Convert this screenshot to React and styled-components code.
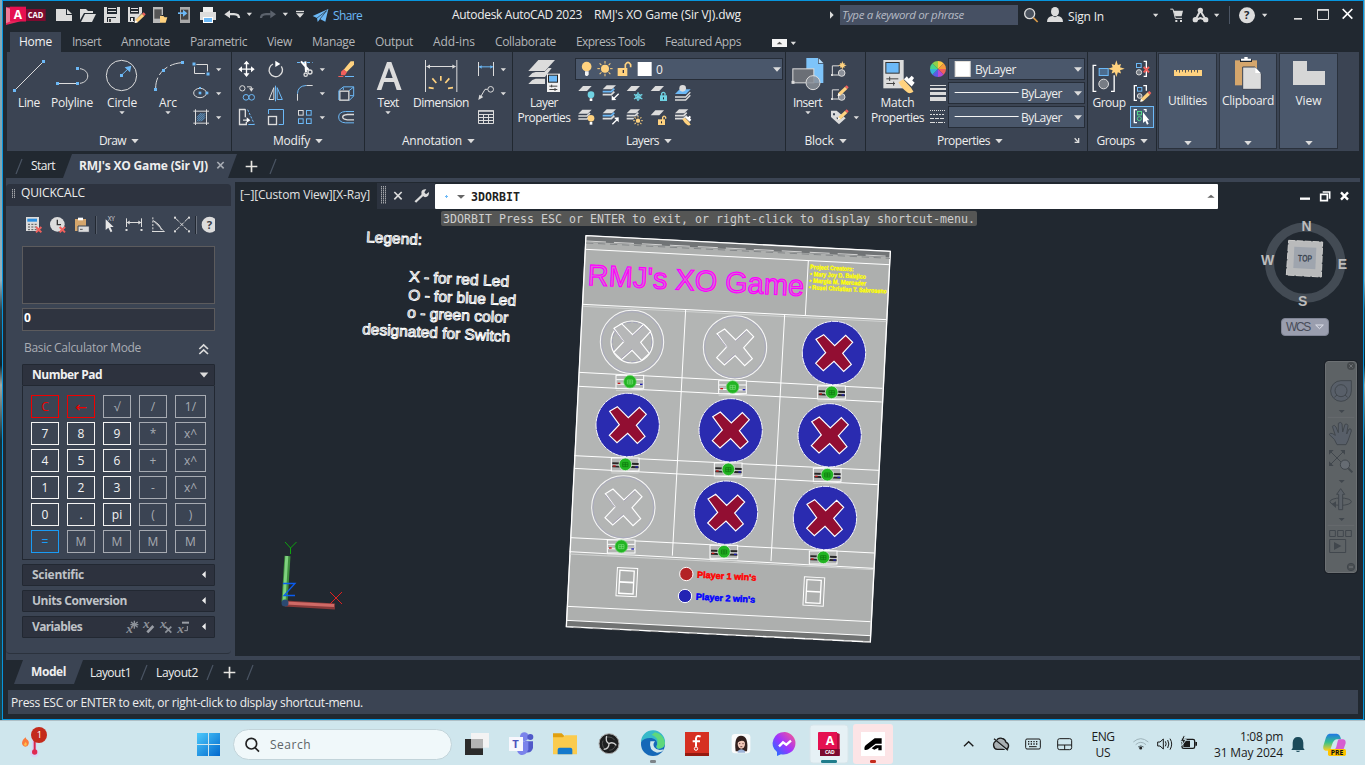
import React, { useLayoutEffect, useRef } from "react";
import styled, { createGlobalStyle } from "styled-components";

const DARK = "#212830";
const PANEL = "#3b4453";
const LIGHT = "#dcdcdc";
const BLUE = "#6cb9f7";
const GOLD = "#ffd27f";
const RED = "#f0605c";
const CYAN = "#6fd3e3";

const Global = createGlobalStyle`
  * { box-sizing: border-box; }
  html, body { margin: 0; padding: 0; overflow: hidden; }
  body { font-family: "Open Sans", "Noto Sans", sans-serif; font-size: 12px; color: #eee; }
`;

/* ---------- shared pieces ---------- */

const Svg = styled.svg`
  display: block;
  flex: none;
  fill: none;
  stroke: ${LIGHT};
  stroke-width: 3;
`;

// Icons are drawn on a grid of three units to the pixel.
const Ico = ({ v, children }) => {
  const [, , w, h] = v.split(" ").map(Number);
  return (
    <Svg viewBox={v} width={w / 3} height={h / 3}>
      {children}
    </Svg>
  );
};
const S = ({ d, c = LIGHT, w = 3, dash }) => <path d={d} stroke={c} strokeWidth={w} strokeDasharray={dash} />;
const F = ({ d, c = LIGHT, s = "none" }) => <path d={d} fill={c} stroke={s} />;
const Dot = ({ x, y, c = BLUE, r = 4.5 }) => <rect x={x - r} y={y - r} width={r * 2} height={r * 2} fill={c} stroke="none" />;
const Down = ({ x, y, r = 8 }) => <F d={`M${x - r} ${y - r * 0.55}h${2 * r}l${-r} ${r * 1.15}z`} />;

const Span = styled.span`
  display: block;
  flex: none;
  white-space: nowrap;
  color: ${(p) => p.$c || "inherit"};
  font-size: ${(p) => p.$size || 12}px;
  font-weight: ${(p) => (p.$bold ? 700 : 400)};
  font-style: ${(p) => (p.$italic ? "italic" : "normal")};
`;

// A run of text whose letter spacing is set so that it takes the given width.
const Txt = ({ w, children, ...rest }) => {
  const ref = useRef(null);
  useLayoutEffect(() => {
    const el = ref.current;
    if (!w) return;
    el.style.letterSpacing = "0px";
    el.style.width = "max-content";
    const natural = el.getBoundingClientRect().width;
    el.style.letterSpacing = (w - natural) / String(children).length + "px";
    el.style.width = w + "px";
  }, [w, children]);
  return (
    <Span ref={ref} {...rest}>
      {children}
    </Span>
  );
};

const Row = styled.div`
  display: flex;
  flex: none;
  align-items: ${(p) => p.$align || "center"};
  gap: ${(p) => p.$gap || 0}px;
  width: ${(p) => (p.$w ? p.$w + "px" : "auto")};
  padding-left: ${(p) => p.$pl || 0}px;
  padding-bottom: ${(p) => p.$pb || 0}px;
`;

/* ---------- window frame ---------- */

const Desktop = styled.div`
  width: 1365px;
  height: 765px;
  display: flex;
  flex-direction: column;
  background: linear-gradient(#86adba 0, #7ea6b4 150px, #93b2be 280px, #2c4650 310px, #10242a 365px, #a0a9a2 385px, #15333a 440px, #1a4650 720px);
`;
const Window = styled.div`
  width: 1362px;
  height: 720px;
  margin-left: 2px;
  border: 1px solid #0795dd;
  background: ${DARK};
  display: flex;
  flex-direction: column;
`;
const TitleBar = styled.div`
  display: flex;
  height: 31px;
  flex: none;
`;
const SearchBox = styled.div`
  width: 178px;
  height: 20px;
  margin-top: 4px;
  padding: 0 0 1px 2px;
  background: #465063;
  display: flex;
  align-items: center;
`;

const Tabs = styled.div`
  display: flex;
  flex: none;
  height: 20px;
  padding-left: 7px;
`;
const Tab = styled.div`
  display: flex;
  align-items: center;
  padding: 0 ${(p) => (p.$on ? 9 : 0)}px 1px;
  margin-right: ${(p) => (p.$on ? 11 : 20)}px;
  background: ${(p) => (p.$on ? PANEL : "transparent")};
  color: ${(p) => (p.$on ? "#f2f2f2" : "#b4b6b9")};
`;

/* ---------- ribbon ---------- */

const Ribbon = styled.div`
  display: flex;
  flex: none;
  height: 99px;
  width: 1352px;
  margin-left: 4px;
  background: ${PANEL};
`;
const PanelBox = styled.div`
  width: ${(p) => p.$w}px;
  flex: none;
  display: flex;
  flex-direction: column;
  border-right: 1px solid ${DARK};
`;
const PanelBody = styled.div`
  display: flex;
  height: 77px;
  padding-top: 5px;
`;
const PanelTitle = styled.div`
  display: flex;
  align-items: center;
  justify-content: center;
  gap: 5px;
  height: 22px;
  padding-top: 1px;
  padding-left: ${(p) => p.$pl || 0}px;
`;
const Big = styled.div`
  width: ${(p) => p.$w}px;
  flex: none;
  display: flex;
  flex-direction: column;
  align-items: center;
  line-height: 15px;
`;
const BigLabel = styled.div`
  display: flex;
  flex-direction: column;
  align-items: center;
  height: 15px;
`;
const Grid = styled.div`
  display: grid;
  grid-template-columns: ${(p) => p.$cols};
  grid-auto-rows: 24px;
  margin-left: ${(p) => p.$ml || 0}px;
  height: 72px;
`;
const Combo = styled.div`
  display: flex;
  align-items: center;
  width: ${(p) => p.$w}px;
  height: 22px;
  margin: 1px 0;
  border: 1px solid #262d38;
  background: #4a576b;
`;
const Stack = styled.div`
  display: flex;
  flex-direction: column;
`;
const Folds = styled.div`
  display: flex;
  gap: 2px;
  padding-left: 1px;
`;
const Fold = styled.div`
  width: ${(p) => p.$w}px;
  height: 96px;
  margin-top: 1px;
  border: 1px solid #2a313c;
  background: #4b586c;
  display: flex;
  flex-direction: column;
  align-items: center;
`;
const FoldFoot = styled.div`
  margin-top: 33px;
`;
const PickOn = styled.div`
  width: 24px;
  height: 22px;
  margin: 1px 0;
  border: 1px solid ${BLUE};
  background: #465a72;
  overflow: hidden;
`;

const Caret = () => (
  <Ico v="0 0 18 12">
    <Down x={9} y={8} />
  </Ico>
);
const Panel = ({ w, title, tw, pl, children, launcher }) => (
  <PanelBox $w={w}>
    <PanelBody>{children}</PanelBody>
    <PanelTitle $pl={pl}>
      <Txt w={tw}>{title}</Txt>
      <Ico v="0 0 24 18">
        <Down x={12} y={9} r={11} />
      </Ico>
      {launcher}
    </PanelTitle>
  </PanelBox>
);
const BigButton = ({ w, labels, caret, icon }) => (
  <Big $w={w}>
    {icon}
    {labels.map(([t, tw]) => (
      <BigLabel key={t}>
        <Txt w={tw}>{t}</Txt>
      </BigLabel>
    ))}
    {caret && <Caret />}
  </Big>
);

const Pencil = ({ x, y }) => (
  <g transform={`translate(${x} ${y})`} stroke="none">
    <path d="M-12 5L8 -14L15 -7L-5 12L-14 14z" fill={GOLD} />
    <path d="M8 -14L13 -18L19 -12L15 -7z" fill={RED} />
    <path d="M-12 5L-14 14L-5 12z" fill="#fff" />
  </g>
);
const Sheet = ({ x, y, c = LIGHT }) => <F c={c} d={`M${x + 14} ${y}h26l-14 15h-26z`} />;
const Sheets = ({ x, y, mid = LIGHT }) => (
  <g>
    <F d={`M${x + 12} ${y}h28l-12 12h-28z`} />
    <S c={mid} w={5} d={`M${x} ${y + 19}h26l9 -9`} />
    <S w={5} d={`M${x} ${y + 28}h26l9 -9`} />
  </g>
);
const Lock = ({ x, y, c, open }) => (
  <g>
    <rect x={x - 10} y={y - 2} width="21" height="17" fill={c} stroke="none" />
    <path d={open ? `M${x + 4} ${y}v-8q5 -7 9 0v4` : `M${x - 5} ${y - 1}v-7q5 -6 10 0v7`} stroke={c} strokeWidth="4" />
    <rect x={x - 1} y={y + 4} width="3" height="6" fill={DARK} stroke="none" />
  </g>
);
const Sun = ({ x, y, r, c = GOLD }) => (
  <g stroke={c}>
    <circle cx={x} cy={y} r={r * 0.55} fill={c} stroke="none" />
    {[0, 45, 90, 135, 180, 225, 270, 315].map((a) => (
      <path key={a} transform={`rotate(${a} ${x} ${y})`} d={`M${x} ${y - r * 0.8}v${-r * 0.4}`} />
    ))}
  </g>
);
const Star = ({ x, y, r }) => {
  const pts = Array.from({ length: 16 }, (_, i) => {
    const a = (i * Math.PI) / 8 - Math.PI / 2;
    const q = i % 2 ? r * 0.48 : i % 4 ? r * 0.8 : r;
    return `${x + q * Math.cos(a)},${y + q * Math.sin(a)}`;
  });
  return <polygon points={pts.join(" ")} fill={GOLD} stroke="none" />;
};
const Cross = ({ x, y, r = 8, c = RED, w = 6 }) => <S c={c} w={w} d={`M${x - r} ${y - r}l${2 * r} ${2 * r}M${x + r} ${y - r}l${-2 * r} ${2 * r}`} />;
const Brush = ({ x, y }) => (
  <g stroke="none">
    <path d={`M${x - 12} ${y - 4}l8 -5l13 14l4 7q-6 4 -10 1q-9 -6 -15 -17z`} fill={GOLD} />
    <path d={`M${x - 3} ${y - 9}l5 -5l3 4l5 -5l4 4l-3 4l4 4l-5 6z`} fill="#fff" />
  </g>
);

const RibbonBar = () => (
  <Ribbon>
    <Panel w={225} title="Draw" tw={27}>
      <BigButton w={44} labels={[["Line", 22]]} icon={
        <Ico v="36 171 102 114"><S d="M44 271L130 185" /><Dot x={43.5} y={271.5} /><Dot x={130.5} y={184.5} /></Ico>} />
      <BigButton w={42} labels={[["Polyline", 42]]} icon={
        <Ico v="165 171 102 114"><S d="M173 250.5H232M240 206C271 210 271 246 240 250" /><Dot x={172.5} y={250.5} /><Dot x={232.5} y={250.5} /><Dot x={232.5} y={205.5} /></Ico>} />
      <BigButton w={58} caret labels={[["Circle", 30]]} icon={
        <Ico v="315 171 102 114"><circle cx="364.5" cy="226.5" r="45.5" /><S c={BLUE} d="M364 226L388 203" /><F c={BLUE} d="M394 197l-4 20l-16 -15z" /><Dot x={364.5} y={226.5} /></Ico>} />
      <BigButton w={34} caret labels={[["Arc", 18]]} icon={
        <Ico v="453 171 102 114"><S dash="34 9" d="M467 266C466 218 505 190 547 188" /><Dot x={466.5} y={268.5} /><Dot x={490.5} y={211.5} /><Dot x={547.5} y={187.5} /></Ico>} />
      <Grid $cols="22px 13px" $ml={5}>
        <Ico v="570 171 66 72"><S d="M589 193.5H622.500V214M615 220.500H583.500V200" /><Dot x={582} y={192} /><Dot x={624} y={222} /></Ico>
        <Ico v="636 171 39 72"><Down x={656} y={209} /></Ico>
        <Ico v="570 243 66 72"><ellipse cx="600" cy="279" rx="19" ry="14" /><Dot x={600} y={279} r={4} /><Dot x={621} y={279} r={4} /><Dot x={600} y={264} r={3} /></Ico>
        <Ico v="636 243 39 72"><Down x={656} y={281} /></Ico>
        <Ico v="570 315 66 72"><S d="M586.500 328V375M619.500 328V375M580 333.500H627M580 369.500H627" /><S c={BLUE} d="M591 364L615 340M591 352L604 339M603 364L615 352M591 358L609 340M597 364L615 346" w={2.5} /></Ico>
        <Ico v="636 315 39 72"><Down x={656} y={353} /></Ico>
      </Grid>
    </Panel>

    <Panel w={133} title="Modify" tw={37}>
      <Grid $cols="29px 29px 28px 16px 24px">
        <Ico v="696 171 87 72"><S c="#fff" w={4} d="M739.500 188V226M720 207.500H760" /><F d="M739.500 182l9 11h-18zM739.500 231l9 -11h-18zM715 207.500l11 -9v18zM764 207.500l-11 -9v18z" c="#fff" /></Ico>
        <Ico v="783 171 87 72"><S w={4} d="M819 192A20 20 0 1 0 844 199" /><F c="#fff" d="M826 182l15 10l-15 9z" /></Ico>
        <Ico v="870 171 84 72"><S c={BLUE} dash="9 6" d="M891 187.500H938" /><S c="#fff" w={6} d="M903 184L926 210M916 184L918 216" /><circle cx="930" cy="216" r="6" strokeWidth="4" /><circle cx="917" cy="224" r="5" strokeWidth="4" /></Ico>
        <Ico v="954 171 48 72"><Down x={967} y={209} /></Ico>
        <Ico v="1002 171 72 72"><F c={GOLD} d="M1031 209L1052 184L1062 184L1062 194L1040 216z" /><F c={RED} d="M1023 215l8 -7l10 9l-6 9h-12z" /><S c={RED} d="M1015 229.500H1030" /><S c={BLUE} d="M1035 229.500H1062" /></Ico>

        <Ico v="696 243 87 72"><circle cx="727" cy="265" r="8" /><S d="M741 260.500H754V266" /><F d="M747 265h14l-7 10z" /><g stroke={BLUE}><circle cx="738" cy="292" r="8.500" /><circle cx="755" cy="292" r="8.500" /></g></Ico>
        <Ico v="783 243 87 72"><S d="M821.500 263V298.500H807z" /><S c={BLUE} d="M831.500 263V298.500H847z" /><S c={BLUE} d="M826.500 257V304" /></Ico>
        <Ico v="870 243 84 72"><S d="M919 256.500H938M892.500 281V302" /><S c={BLUE} d="M892.500 281Q893 258 918 256.500" /></Ico>
        <Ico v="954 243 48 72"><Down x={967} y={281} /></Ico>
        <Ico v="1002 243 72 72"><rect x="1019.500" y="273.500" width="27" height="27" strokeWidth="4" /><S c={BLUE} d="M1016.500 300V272L1030 260.500H1061V288L1048 301M1047 272L1061 261M1030 262V270M1050 287H1060" /></Ico>

        <Ico v="696 315 87 72"><S w={4} d="M736 328.500H718.500V373.500H739V366M736 328V352M729 360.500H743" /><F c="#fff" d="M740 352l11 8.500l-11 8z" /><S c={BLUE} dash="7 4" d="M743 329L762 370" /><S c={BLUE} d="M745 373.500H764" /></Ico>
        <Ico v="783 315 87 72"><S c={BLUE} d="M805.500 342V328.500H850.500V373.500H836" /><rect x="805.500" y="349.500" width="24" height="24" strokeWidth="4" /></Ico>
        <Ico v="870 315 84 72"><rect x="895.500" y="331.500" width="14" height="14" /><g stroke={BLUE}><rect x="919.500" y="331.500" width="14" height="14" /><rect x="895.500" y="356.500" width="14" height="14" /><rect x="919.500" y="356.500" width="14" height="14" /></g></Ico>
        <Ico v="954 315 48 72"><Down x={967} y={353} /></Ico>
        <Ico v="1002 315 72 72"><S c={BLUE} d="M1062 334.500H1036Q1016 336 1016 351Q1016 367 1036 368.500H1062" /><S w={4} d="M1062 343.500H1042Q1028 345 1028 351Q1028 358 1042 359.500H1062" /></Ico>
      </Grid>
    </Panel>

    <Panel w={148} title="Annotation" tw={60}>
      <BigButton w={46} caret labels={[["Text", 21]]} icon={
        <Ico v="1113 171 102 114"><F d="M1130 270L1161 186H1174L1205 270H1190L1182 246H1152L1144 270zM1156 234H1178L1167 203z" /></Ico>} />
      <BigButton w={60} labels={[["Dimension", 56]]} icon={
        <Ico v="1272 171 102 114"><S d="M1276.500 180V276M1370.500 180V276M1280 199.500H1366" /><F d="M1279 199.500l11 -6v13zM1368 199.500l-11 -6v13z" /><S c={GOLD} w={5} d="M1322.500 228V242M1297 235L1309 249M1348 235L1336 249M1286 263L1301 265M1359 263L1344 265" /></Ico>} />
      <Grid $cols="21px 12px" $ml={5}>
        <Ico v="63 171 63 72"><S d="M70.500 186V228M115.500 186V228" /><S c={BLUE} d="M72 200.500H114" /><F c={BLUE} d="M72 200.500l8 -5v11zM114 200.500l-8 -5v11z" /></Ico>
        <Ico v="126 171 36 72"><Down x={145} y={209} /></Ico>
        <Ico v="63 243 63 72"><circle cx="107" cy="268" r="8.500" /><S d="M98 268H90L77 290" /><F d="M70 300l3 -16l12 7z" /></Ico>
        <Ico v="126 243 36 72"><Down x={145} y={281} /></Ico>
        <Ico v="63 315 63 72"><S d="M70.500 332.500H115.500V370.500H70.500zM70 343.500H115M70 352.500H115M70 361.500H115M85.500 343V370M100.500 343V370" /><S w={4} d="M69 333H117" /></Ico>
      </Grid>
    </Panel>

    <Panel w={273} title="Layers" tw={33}>
      <BigButton w={62} labels={[["Layer", 28], ["Properties", 53]]} icon={
        <Ico v="216 171 102 114">
          <F d="M250 180H300L270 213H220z" /><F d="M242 216H268L280 204H290L270 231H220L232 219z" /><F d="M242 236H270V252H220L232 240z" />
          <rect x="276" y="221" width="39" height="55" fill="#f0f0f0" stroke="none" /><rect x="280.500" y="225.500" width="27" height="21" fill={BLUE} stroke="#222" />
          <S c="#444" d="M283 258.500H307M283 268.500H307M290 254V262M300 264V273" />
        </Ico>} />
      <Stack>
        <Combo $w={208}>
          <Ico v="364 177 180 60">
            <circle cx="396" cy="200" r="14.500" fill={GOLD} stroke="none" /><F c="#f4f4f4" d="M391 214h11v10l-4 4h-4l-3 -3z" />
            <circle cx="451" cy="206" r="12" fill={GOLD} stroke="none" /><Sun x={451} y={206} r={19} />
            <F c={GOLD} d="M489 204h29v24h-29z" /><S c={GOLD} w={5} d="M512 206V194Q520 180 528 194V202" /><F c="#334" d="M504 210h4v9h-4z" />
          </Ico>
          <Ico v="544 177 60 60"><rect x="549" y="186" width="42" height="42" fill="#fff" stroke="none" /></Ico>
          <Row $w={115}><Span>0</Span></Row>
          <Ico v="945 177 36 60"><Down x={963} y={208} r={12} /></Ico>
        </Combo>
        <Grid $cols="24px 24px 24px 24px 24px">
          <Ico v="361 243 72 72"><Sheet x={371} y={258} /><circle cx="409" cy="284" r="10" fill={CYAN} stroke="none" /><F d="M405 295h8v8h-8z" c="#fff" /></Ico>
          <Ico v="433 243 72 72"><Sheets x={444} y={256} mid={BLUE} /><S c="#fff" w={4} d="M492 281L476 297" /><F c="#fff" d="M471 301v-15l14 14z" /></Ico>
          <Ico v="505 243 72 72"><Sheet x={516} y={258} /><S c={CYAN} w={4} d="M550 277V303M538 283L563 297M563 283L538 297" /><circle cx="550.500" cy="290" r="8" stroke={CYAN} /></Ico>
          <Ico v="577 243 72 72"><Sheet x={588} y={258} /><Lock x={626} y={288} c={CYAN} /></Ico>
          <Ico v="649 243 72 72"><F c={BLUE} d="M675 268h33l-14 14h-33z" /><circle cx="684" cy="265" r="10" fill={LIGHT} stroke="none" /><S w={4} d="M661 291H693L707 277M661 300H693L707 286" /></Ico>
          <Ico v="361 315 72 72"><Sheets x={371} y={329} /><circle cx="409" cy="355" r="10" fill={GOLD} stroke="none" /><F d="M405 366h8v8h-8z" c="#fff" /></Ico>
          <Ico v="433 315 72 72"><Sheets x={444} y={328} mid={BLUE} /><S c="#fff" w={4} d="M473 373L489 357" /><F c="#fff" d="M492 352v15l-14 -14z" /></Ico>
          <Ico v="505 315 72 72"><Sheets x={516} y={328} /><circle cx="550" cy="362" r="14" fill={PANEL} stroke="none" /><Sun x={550} y={362} r={12} /></Ico>
          <Ico v="577 315 72 72"><Sheet x={588} y={331} /><Lock x={620} y={360} c={GOLD} open /></Ico>
          <Ico v="649 315 72 72"><Sheets x={661} y={328} /><Brush x={695} y={362} /></Ico>
        </Grid>
      </Stack>
    </Panel>

    <Panel w={80} title="Block" tw={29}>
      <BigButton w={43} caret labels={[["Insert", 29]]} icon={
        <Ico v="1007 171 102 114">
          <F c="#7ec4fa" d="M1053 174H1088V191H1104V249H1053z" /><F c="#b9dffc" d="M1090 175l14 14h-14z" />
          <rect x="1012.500" y="206.500" width="63" height="42" fill="#6b6f76" /><circle cx="1073" cy="248" r="21" fill="#8a8f98" fillOpacity=".85" /><Dot x={1013} y={247} c={LIGHT} />
        </Ico>} />
      <Grid $cols="20px 20px">
        {[171, 243, 315].map((y, i) => (
          <React.Fragment key={y}>
            <Ico v={`1122 ${y} 60 72`}>
              {i < 2 ? (
                <g><S d={`M1152 ${y + 26.5}H1132V${y + 54}H1160V${y + 38}`} /><circle cx="1160" cy={y + 48} r="10" fill="#8a8f98" /><Dot x={1131} y={y + 54} c={LIGHT} r={3} /></g>
              ) : (
                <F d="M1128 332h17l27 23l-20 18l-24 -22z" />
              )}
              {i === 2 && <F c={PANEL} d="M1134 340h6v6h-6zM1143 353l8 8l14 -10z" />}
              {i === 0 ? <Star x={1162} y={196} r={13} /> : <Pencil x={1162} y={y + 31} />}
            </Ico>
            <Ico v={`1182 ${y} 60 72`}>{i === 2 && <Down x={1204} y={353} />}</Ico>
          </React.Fragment>
        ))}
      </Grid>
    </Panel>

    <Panel
      w={222}
      title="Properties"
      tw={53}
      pl={66}
      launcher={
        <Row $pl={66}>
          <Ico v="501 414 24 21"><S d="M503 418L513 428" w={4} /><S w={4} d="M515 417V430H503" /></Ico>
        </Row>
      }
    >
      <BigButton w={63} labels={[["Match", 34], ["Properties", 53]]} icon={
        <Ico v="1276 171 102 114">
          <F d="M1283 180H1344V265H1283z" /><rect x="1290.500" y="187.500" width="40" height="32" fill={BLUE} stroke="#333" />
          <S c="#444" d="M1292 236.500H1328M1292 250.500H1318M1302 230V243M1314 245V257" /><g transform="translate(1350 254) scale(1.8)"><Brush x={0} y={0} /></g>
        </Ico>} />
      <Grid $cols="19px">
        <Ico v="57 171 57 72">
          {["#fbc540", "#f59a3c", "#f0605c", "#b54ad4", "#5b5be6", "#35b6d8", "#45d58c", "#8fd04a"].map((c, i) => (
            <path key={c} transform={`rotate(${i * 45} 84 207)`} d="M84 207V183A24 24 0 0 1 101 190z" fill={c} stroke="none" />
          ))}
        </Ico>
        <Ico v="57 243 57 72"><F d="M60 255h48v3h-48zM60 264h48v6h-48zM60 276h48v9h-48zM60 291h48v12h-48z" /></Ico>
        <Ico v="57 315 57 72"><S dash="3 3" d="M60 331.500H105" /><S dash="6 3" d="M60 343.500H105" /><S dash="12 3" d="M60 355.500H105" /><S dash="15 3 3 3" d="M60 367.500H105" /></Ico>
      </Grid>
      <Stack>
        <Combo $w={137}>
          <Ico v="118 177 75 60"><rect x="136.500" y="184.500" width="45" height="45" fill="#fff" stroke="#e4e0da" /></Ico>
          <Row $w={96} $pl={1}><Txt w={41}>ByLayer</Txt></Row>
          <Ico v="483 177 42 60"><Down x={507} y={208} r={12} /></Ico>
        </Combo>
        {[1, 2].map((k) => (
          <Combo $w={137} key={k}>
            <Ico v="118 249 216 60"><S c="#f5f5f5" d="M135 277.500H327" /></Ico>
            <Row $w={50}><Txt w={41}>ByLayer</Txt></Row>
            <Ico v="483 249 39 60"><Down x={504} y={280} r={12} /></Ico>
          </Combo>
        ))}
      </Stack>
    </Panel>

    <Panel w={69} title="Groups" tw={38}>
      <BigButton w={42} labels={[["Group", 33]]} icon={
        <Ico v="547 171 102 114">
          <S c="#fff" w={4} d="M560 196H550.500V274H560M604 274H613.500V226" /><rect x="568.500" y="205.500" width="27" height="21" stroke={BLUE} fill="#4c6c8e" /><circle cx="582" cy="252" r="14.500" fill="#777c84" /><Star x={620} y={206} r={25} />
        </Ico>} />
      <Stack>
        <Ico v="660 171 72 72"><rect x="679.500" y="190.500" width="14" height="12" stroke={BLUE} /><circle cx="687" cy="217" r="8" fill="#777c84" /><S c="#fff" w={4} d="M701 184H709V229H701" /><Cross x={709} y={209} /></Ico>
        <Ico v="660 243 72 72"><S c="#fff" w={4} d="M681 257H673V301H681M700 257H709V272" /><rect x="682.500" y="262.500" width="13" height="11" stroke={BLUE} /><circle cx="689" cy="288" r="7" fill="#777c84" /><Pencil x={705} y={291} /></Ico>
        <PickOn>
          <Ico v="663 321 66 60"><S c="#fff" w={4} d="M681 329H673V368H681M701 329H708V336" /><rect x="682.500" y="334.500" width="12" height="10" stroke="#55d98a" /><circle cx="688" cy="356" r="6" stroke="#55d98a" /><F c="#fff" d="M699 337V369L706 363L711 374L716 371L711 361H718z" /></Ico>
        </PickOn>
      </Stack>
    </Panel>

    <Folds>
      {[
        ["Utilities", 39, 59, <Ico key="u" v="780 165 102 114"><F c={GOLD} d="M789 213h84v18h-84z" /><S c="#555" d="M796.500 213v5M805.500 213v8M814.500 213v5M823.500 213v8M832.500 213v5M841.500 213v8M850.500 213v5M859.500 213v8" /></Ico>],
        ["Clipboard", 52, 58, <Ico key="c" v="963 165 102 114"><F c="#d5a66c" d="M975 184h66v75h-66z" /><F c={DARK} d="M990 181h36v8h-36z" /><F c="#fff" d="M993 179h10v-5h10v5h10v6h-30z" /><F s={PANEL} d="M998 204H1034L1054 224V271H998z" /><F c="#fff" d="M1036 205l16 17h-16z" /></Ico>],
        ["View", 26, 59, <Ico key="v" v="1146 165 102 114"><F c="#d6d6d6" d="M1149 186h42v30h54v42h-96z" /></Ico>],
      ].map(([t, w, fw, icon]) => (
        <Fold key={t} $w={fw}>
          {icon}
          <BigLabel><Txt w={w}>{t}</Txt></BigLabel>
          <FoldFoot><Ico v="0 0 24 18"><Down x={12} y={9} r={11} /></Ico></FoldFoot>
        </Fold>
      ))}
    </Folds>
  </Ribbon>
);

/* ---------- title and tab strips ---------- */

const TitleStrip = () => (
  <TitleBar>
    <Ico v="9 3 147 93">
      <F c="#e8285e" d="M18 22H78V64H62L18 75z" /><F c="#f07a96" d="M18 70L34 63V28L18 22z" /><F c="#e51050" d="M30 20H78V64H30z" /><F c="#7d0b2f" d="M78 27H137V63H78z" />
      <text x="41" y="56" fontSize="36" fontWeight="700" fill="#fff" stroke="none" fontFamily="Open Sans">A</text>
      <text x="83" y="54" fontSize="25" fontWeight="700" fill="#fff" stroke="none" fontFamily="Open Sans" textLength="47" lengthAdjust="spacingAndGlyphs">CAD</text>
    </Ico>
    <Ico v="156 3 72 93"><F d="M168 27H198V45H216V63H168z" /><F d="M201 27l15 15h-15z" /></Ico>
    <Ico v="228 3 72 93"><F d="M240 27H258L264 33H279V39H252L240 60z" /><F d="M255 42H288L276 66H243z" /></Ico>
    <Ico v="300 3 72 93"><F d="M312 21H360V69H312z" /><F c={DARK} d="M321 21h30v21h-30z" /><F c={DARK} d="M321 51h27v15h-27z" /><F d="M324 24h24v3h-24zM324 33h24v3h-24zM324 54h24v15h-24z" /><F c="#444" d="M327 57h6v9h-6z" /></Ico>
    <Ico v="372 3 72 93"><F d="M384 21H426V39L402 66H384z" /><F c={DARK} d="M390 21h27v20h-27z" /><F d="M393 24h21v3h-21zM393 33h21v3h-21z" /><F c={DARK} d="M390 51h14v12h-14z" /><F c="#eee" d="M393 54h6v9h-6z" /><Pencil x={418} y={55} /></Ico>
    <Ico v="444 3 72 93"><F d="M459 21H489V45H480V69H459z" c="#b9b9b9" /><F c="#555" d="M463 28h22v28h-22z" /><F c={GOLD} d="M480 48h10l4 4h8l-5 16h-17z" /></Ico>
    <Ico v="516 3 72 93"><F d="M540 21H570V69H540z" c="#a9a9a9" /><F c="#444" d="M543 29h22v30h-22z" /><S c={BLUE} w={5} d="M534 39.500H552" /><F c={BLUE} d="M549 29l13 10.500l-13 10.500z" /></Ico>
    <Ico v="588 3 72 93"><F c="#eee" d="M609 21h30v15h-30z" /><F d="M600 36h48v24h-48z" /><F c="#fff" d="M609 51h30v18h-30z" /><F c={BLUE} d="M612 54h24v12h-24z" /></Ico>
    <Ico v="660 3 72 93"><S w={7} d="M688 42.500H702Q717 43 717 54" /><F d="M673 43L690 31V55z" /></Ico>
    <Ico v="732 3 36 93"><Down x={748} y={43} /></Ico>
    <Ico v="768 3 72 93"><S c="#5b626c" w={7} d="M812 42.500H798Q783 43 783 54" /><F c="#5b626c" d="M828 43L811 31V55z" /></Ico>
    <Ico v="840 3 33 93"><Down x={856} y={43} /></Ico>
    <Ico v="873 3 57 93"><S w={4} d="M888 34.500H912" /><Down x={900} y={46} r={12} /></Ico>
    <Ico v="930 3 63 93"><F c={BLUE} d="M938 48L985 27L976 65L960 57L953 66L951 54z" /><S c={DARK} w={2} d="M951 54L980 32L960 57" /></Ico>
    <Row $w={121} $pl={2} $pb={3}><Txt w={29} $c={BLUE}>Share</Txt></Row>
    <Row $w={373} $gap={12} $pb={4}><Txt w={130}>Autodesk AutoCAD 2023</Txt><Txt w={147}>RMJ's XO Game (Sir VJ).dwg</Txt></Row>
    <Ico v="1110 3 45 93"><F d="M1125 34l11 11l-11 11z" /></Ico>
    <SearchBox><Txt w={122} $italic $size={11.5} $c="#b5bac3">Type a keyword or phrase</Txt></SearchBox>
    <Ico v="324 3 75 93"><circle cx="359" cy="41" r="15" strokeWidth="4" fill="#4a525e" /><S c="#d99a4a" w={5} d="M370 53L383 66" /></Ico>
    <Ico v="399 3 69 93"><ellipse cx="435" cy="35" rx="12" ry="14" fill={LIGHT} stroke="none" /><F d="M411 66Q411 50 428 48L435 52L442 48Q459 50 459 66z" /></Ico>
    <Row $w={84} $pl={2} $pb={1}><Txt w={36}>Sign In</Txt></Row>
    <Ico v="720 3 54 93"><Down x={737} y={46} /></Ico>
    <Ico v="774 3 66 93"><S d="M781 27.500H789L796 55H816" /><F d="M790 32H819L815 49H796z" /><F d="M796 60h6v6h-6zM810 60h6v6h-6z" /></Ico>
    <Ico v="840 3 66 93"><S w={6} d="M871 32L856 60L871 54L888 60z" /><circle cx="871" cy="31" r="8" fill={LIGHT} stroke="none" /><circle cx="856" cy="59" r="8" fill={LIGHT} stroke="none" /><circle cx="887" cy="59" r="8" fill={LIGHT} stroke="none" /></Ico>
    <Ico v="906 3 75 93"><Down x={920} y={46} /><S c="#4b5564" d="M958.500 18V72" /></Ico>
    <Ico v="981 3 102 93"><circle cx="1011" cy="46" r="24" fill={LIGHT} stroke="none" /><text x="1002" y="58" fontSize="34" fontWeight="700" fill={DARK} stroke="none">?</text><Down x={1064} y={46} /></Ico>
    <Ico v="1083 3 276 93"><F d="M1152 54h24v5h-24z" /><S d="M1222.500 28.500H1255.500V58.500H1222.500z" /><S w={5} d="M1222 30H1256" /><S c="#fff" w={5} d="M1298 27L1327 56M1327 27L1298 56" /></Ico>
  </TitleBar>
);

const FileTabs = styled.div`
  display: flex;
  flex: none;
  align-items: center;
  height: ${(p) => p.$h || 27}px;
  padding-left: ${(p) => p.$pl}px;
  padding-top: ${(p) => p.$pt || 0}px;
`;
const Slanted = styled.div`
  display: flex;
  flex: none;
  align-items: center;
  gap: 8px;
  width: ${(p) => p.$w}px;
  height: ${(p) => p.$h}px;
  padding-left: ${(p) => p.$pl}px;
  padding-bottom: 1px;
  align-self: flex-end;
  background: ${PANEL};
  clip-path: polygon(9px 0, 100% 0, calc(100% - 9px) 100%, 0 100%);
`;
const Slash = () => (
  <Ico v="0 0 24 51"><S c="#4b5564" w={3.5} d="M3 48L21 3" /></Ico>
);
const Plus = () => (
  <Ico v="0 0 39 39"><S c="#e8e6e2" w={5} d="M19.500 2V37M2 19.500H37" /></Ico>
);

/* ---------- calculator palette ---------- */

const Main = styled.div`
  display: flex;
  flex: none;
  height: 478px;
  padding-left: 3px;
`;
const Palette = styled.div`
  width: 229px;
  flex: none;
  background: ${PANEL};
  padding-top: 6px;
  display: flex;
  flex-direction: column;
`;
const PaletteHead = styled.div`
  width: 225px;
  height: 22px;
  flex: none;
  display: flex;
  align-items: center;
  padding-bottom: 5px;
  background: #2d333f;
  border-radius: 4px 4px 0 0;
`;
const PaletteBody = styled.div`
  width: 225px;
  height: 448px;
  padding: 7px 0 0 16px;
  border-bottom: 1px solid #2b323d;
  border-radius: 0 0 4px 4px;
`;
const Field = styled.div`
  width: 193px;
  height: ${(p) => p.$h}px;
  margin-top: ${(p) => p.$mt}px;
  padding: 0 0 4px 1px;
  display: flex;
  align-items: center;
  background: #2f3440;
  border: 1px solid #5c5b5d;
`;
const Mode = styled.div`
  display: flex;
  align-items: center;
  justify-content: space-between;
  width: 193px;
  height: 33px;
  padding: 0 6px 0 2px;
  color: #a9adb4;
`;
const Section = styled.div`
  width: 193px;
  height: 22px;
  margin-top: ${(p) => p.$mt}px;
  padding: 0 ${(p) => p.$pr || 7}px 1px 9px;
  display: flex;
  align-items: center;
  justify-content: space-between;
  background: #2d323e;
  border: 1px solid #222832;
  border-radius: 1px;
  font-weight: 700;
`;
const Pad = styled.div`
  width: 193px;
  height: 174px;
  padding: 9px 0 0 8px;
  border: 1px solid #222832;
  border-top: 0;
  display: grid;
  grid-template-columns: 28px 28px 28px 28px 31px;
  grid-auto-rows: 23px;
  gap: 4px 8px;
`;
const keyColor = { n: "#f4f4f4", f: "#a7abb2", r: "#f00000", e: "#1a9bf5" };
const Key = styled.div`
  display: flex;
  align-items: center;
  justify-content: center;
  border: 1px solid ${(p) => keyColor[p.$k]};
  color: ${(p) => keyColor[p.$k]};
  font-size: ${(p) => (p.$arrow ? 14 : 12)}px;
  font-family: ${(p) => (p.$arrow ? '"DejaVu Sans", sans-serif' : "inherit")};
`;

const keys = [
  ["C", "r"], ["←", "r"], ["√", "f"], ["/", "f"], ["1/", "f"],
  ["7", "n"], ["8", "n"], ["9", "n"], ["*", "f"], ["x^", "f"],
  ["4", "n"], ["5", "n"], ["6", "n"], ["+", "f"], ["x^", "f"],
  ["1", "n"], ["2", "n"], ["3", "n"], ["-", "f"], ["x^", "f"],
  ["0", "n"], [".", "n"], ["pi", "n"], ["(", "f"], [")", "f"],
  ["=", "e"], ["M", "f"], ["M", "f"], ["M", "f"], ["M", "f"],
];
const Left = () => <Ico v="0 0 18 27"><F c="#eee" d="M14 3V24L3 13.500z" /></Ico>;
const VarIcons = () => (
  <Ico v="375 537 204 48">
    <g fill="#8c9199" stroke="none" fontFamily="Liberation Serif" fontStyle="italic" fontSize="40">
      <text x="379" y="578">x</text><text x="429" y="564">x</text><text x="480" y="564">x</text><text x="532" y="578">x</text>
    </g>
    <S c="#8c9199" w={4} d="M403 542V566M393 546L413 562M413 546L393 562M391 554H415" />
    <S c="#9a9ea6" w={8} d="M442 577L460 558" />
    <Cross x={505} y={569} r={9} c="#8c9199" w={5} />
    <S c="#9a9ea6" w={6} d="M546 548H567" /><S c="#9a9ea6" d="M553 572H562V558" />
  </Ico>
);

const CalcPalette = () => (
  <Palette>
    <PaletteHead>
      <Ico v="18 15 45 51"><S dash="3 3" d="M37.500 31V57M43.500 31V57" /></Ico>
      <Txt w={64}>QUICKCALC</Txt>
    </PaletteHead>
    <PaletteBody>
      <Row>
        <Ico v="66 99 72 69"><F d="M78 111h39v42h-39z" /><F c="#2b8fe0" d="M82 116h29v9h-29z" /><S c="#555" dash="6 4" d="M84 133H110M84 141H110M84 149H110" /><Cross x={116} y={149} /></Ico>
        <Ico v="138 99 72 69"><circle cx="172" cy="133" r="22" fill={LIGHT} stroke="none" /><S c="#333" w={4} d="M172 119V134H183" /><Cross x={187} y={149} /></Ico>
        <Ico v="210 99 72 69"><F c="#d5a66c" d="M225 117h33v36h-33z" /><F c="#fff" d="M234 113h15v8h-15z" /><F s={PANEL} d="M234 138h34v19h-34z" /><S c="#555" d="M240 148H248" /></Ico>
        <Ico v="282 99 18 69"><S c="#222832" d="M286.500 108V162" /><S c="#555d6a" d="M289.500 108V162" /></Ico>
        <Ico v="300 99 66 69"><F c="#e6e6e6" d="M317 118V150L325 143L332 157L337 154L331 141H341z" /><text x="323" y="124" fontSize="19" fill={LIGHT} stroke="none">XY</text></Ico>
        <Ico v="366 99 72 69"><S d="M379.500 115V141M424.500 115V141M382 127.500H422" /><F d="M380 127.500l9 -6v12zM424 127.500l-9 -6v12z" /><Dot x={379.500} y={150} r={3} c={LIGHT} /><Dot x={424.500} y={150} r={3} c={LIGHT} /></Ico>
        <Ico v="438 99 69 69"><S dash="6 4" d="M458.500 112V154" /><S d="M456 154.500H494M460 122Q482 134 484 150M460 122L490 152" /></Ico>
        <Ico v="507 99 72 69"><S d="M527 115L564 152M564 115L527 152" dash="14 4" /><Dot x={525} y={113} r={3} c={LIGHT} /><Dot x={567} y={113} r={3} c={LIGHT} /><Dot x={525} y={154} r={3} c={LIGHT} /><Dot x={567} y={154} r={3} c={LIGHT} /></Ico>
        <Ico v="579 99 21 69"><S c="#222832" d="M586.500 108V162" /><S c="#6a717c" d="M589.500 108V162" /></Ico>
        <Ico v="600 99 45 69"><circle cx="629" cy="134" r="24" fill={LIGHT} stroke="none" /><text x="620" y="146" fontSize="34" fontWeight="700" fill="#3b4048" stroke="none">?</text></Ico>
      </Row>
      <Field $h={58} $mt={10} />
      <Field $h={23} $mt={4}><Span $bold $c="#fff">0</Span></Field>
      <Mode>
        <Txt w={117}>Basic Calculator Mode</Txt>
        <Ico v="594 483 33 42"><S w={5} d="M598 507L611 495L624 507M598 522L611 510L624 522" /></Ico>
      </Mode>
      <Section $mt={0} $pr={4}><Txt w={70} $bold $c="#f0f0f0">Number Pad</Txt><Ico v="0 0 36 24"><Down x={18} y={12} r={13} /></Ico></Section>
      <Pad>{keys.map(([t, k], i) => <Key key={i} $k={k} $arrow={t === "←"}>{t}</Key>)}</Pad>
      <Section $mt={4}><Txt w={52} $bold $c="#bfc2c7">Scientific</Txt><Left /></Section>
      <Section $mt={4}><Txt w={95} $bold $c="#bfc2c7">Units Conversion</Txt><Left /></Section>
      <Section $mt={4}><Txt w={50} $bold $c="#bfc2c7">Variables</Txt><Row $pl={35}><VarIcons /></Row><Left /></Section>
    </PaletteBody>
  </Palette>
);

/* ---------- drawing viewport ---------- */

const Viewport = styled.div`
  position: relative;
  width: 1125px;
  flex: none;
  border-top: 4px solid ${PANEL};
  background: ${DARK};
`;
const Float = styled.div`
  position: absolute;
  left: ${(p) => p.$x}px;
  top: ${(p) => p.$y}px;
  display: flex;
  align-items: center;
`;
const CmdTools = styled.div`
  display: flex;
  width: 58px;
  height: 26px;
  background: #2c333f;
`;
const CmdInput = styled.div`
  display: flex;
  align-items: center;
  justify-content: space-between;
  width: 783px;
  height: 25px;
  background: #fff;
  border-radius: 1px;
`;
const Mono = styled.div`
  font-family: "DejaVu Sans Mono", monospace;
`;
const CmdWord = styled(Mono)`
  padding-top: 2px;
  margin-left: -1px;
`;
const Hint = styled(Mono)`
  width: 536px;
  height: 15px;
  padding-left: 2px;
  background: #555655;
  color: #cfcfcf;
  border-radius: 2px;
  line-height: 16px;
`;
const Wcs = styled.div`
  display: flex;
  align-items: center;
  gap: 4px;
  width: 48px;
  height: 18px;
  padding: 0 0 1px 4px;
  background: #9a9eae;
  border: 1px solid #7f8494;
  border-radius: 4px;
  font-family: "Liberation Sans", sans-serif;
`;
const NavBar = styled.div`
  width: 32px;
  height: 212px;
  background: #5d6265;
  border: 1px solid #6c7073;
  border-radius: 3px;
  outline: 1px solid #1a1f26;
  overflow: hidden;
`;

const discs = [
  [216, 351, "ring"], [525, 367, "x"], [822, 384, "on"],
  [203, 600, "on"], [512, 616, "on"], [809, 631, "on"],
  [190, 847, "x"], [498, 863, "on"], [795, 879, "on"],
];
const switches = [
  [210, 470, 0], [518, 486, 0], [815, 502, 1],
  [196, 718, 1], [505, 733, 1], [802, 749, 1],
  [184, 964, 0], [492, 980, 1], [790, 997, 1],
];
const CROSS = "-54,-41 -31,-55 2,-22 35,-53 56,-32 26,1 52,34 29,55 0,25 -32,53 -55,31 -25,-1";

const Digit = ({ x, y }) => (
  <g transform={`translate(${x} ${y}) rotate(3)`} stroke="#fff">
    <rect x="-31" y="-43" width="61" height="85" />
    <path d="M-23 -35H20V34H-23z" strokeWidth="4" />
    <path d="M-23 0H20" strokeWidth="5" />
  </g>
);

const Board = () => (
  <Svg viewBox="0 0 1125 474" width="1125" height="474">
    <g transform="translate(325 43) scale(.33333)">
      <polygon points="78,32 991,79 931,1251 19,1205" fill="#adafae" />
      <polygon points="69,238 979,284 940,1030 29,980" fill="#b3b5b4" stroke="none" />
      <polygon points="78,32 991,79 990,97 78,50" fill="#717476" stroke="none" />
      <polygon points="19,1186 931,1232 931,1250 19,1205" fill="#717373" stroke="none" />
      <g stroke="#fff">
        <path d="M78 32L991 79L931 1251L19 1205z" strokeWidth="4" />
        <path d="M78 48L990 94" strokeDasharray="60 24" stroke="#d4d4d4" />
        <path d="M78 54L990 100" strokeDasharray="22 14" stroke="#85888a" />
        <path d="M78 73L987 119M69 238L979 284M745 107L736 270" />
        <path d="M69 244L979 290M29 987L940 1034" stroke="#d0d2d1" />
        <path d="M377 254L337 992M674 269L633 1008" />
        <path d="M57 442L967 490M57 484L965 531M43 692L957 736M42 730L953 779M32 938L943 984M29 980L940 1030" />
        <path d="M21 1144L931 1190M19 1186L931 1232" />
        <path d="M40 1208L931 1252" strokeDasharray="24 34" stroke="#777" strokeWidth="2" />
      </g>
      {discs.map(([x, y, k]) => (
        <g key={x + "-" + y} transform={`translate(${x} ${y})`}>
          {k === "on" ? (
            <circle r="95" fill="#2a2bb0" stroke="#f4f4ff" strokeWidth="3" strokeDasharray="20 2" />
          ) : (
            <g>
              <circle r="95" fill="#b3b5b4" stroke="#f6f6f6" strokeWidth="3.200" />
              <circle r="91" stroke="#a6a6c2" strokeWidth="2" />
            </g>
          )}
          {k === "ring" && <circle r="63" stroke="#fff" strokeWidth="3.500" />}
          {k === "ring" && <circle r="59" stroke="#9d9db8" strokeWidth="2.500" strokeDasharray="14 6" />}
          <polygon points={CROSS} fill={k === "on" ? "#920e32" : "#b6b7b8"} stroke="#fff" strokeWidth="3.500" />
          {k !== "on" && <path d="M-54 -37L-25 0M2 -19L35 -49M-32 49L0 21" stroke="#a49db6" strokeWidth="2.500" />}
        </g>
      ))}
      {switches.map(([x, y, on]) => (
        <g key={x + "-" + y} transform={`translate(${x} ${y})`}>
          <rect x="-42" y="-19" width="83" height="39" fill="#b3b5b4" stroke="#fff" />
          <path d="M-42 26H40" stroke="#cfd1d0" />
          {on ? <path d="M-39 -3L40 -1M-39 6L40 9" stroke="#262626" strokeWidth="6" /> : <path d="M-41 -6H40M-41 7L40 9" stroke="#fff" />}
          <path d="M-39 2L40 4" stroke="#c4c4c4" />
          <path d="M-37 5H-29" stroke="#c01818" strokeWidth="4" />
          <path d="M30 8H38" stroke="#1c1cb0" strokeWidth="4" />
          <circle r="19" fill="#22b422" stroke={on ? "#f4f4f4" : "#7edc7e"} strokeWidth="2" />
          <path d="M-8 -5H8V7H-8zM-8 1H8M0 -5V7" stroke={on ? "#0d700d" : "#7fe07f"} strokeWidth="2" />
        </g>
      ))}
      <Digit x={201} y={1072} />
      <Digit x={762} y={1100} />
      <circle cx="379" cy="1047" r="20" fill="#b32326" stroke="#fff" />
      <circle cx="375" cy="1113" r="20" fill="#2323b4" stroke="#fff" />
      <g fontFamily="Liberation Sans" strokeWidth="3.500">
        <text transform="translate(82 180) rotate(2.900)" fontSize="88" textLength="650" lengthAdjust="spacingAndGlyphs" fill="#cf70d3" stroke="#ff00ff">RMJ's XO Game</text>
        <g fill="#ff0" stroke="#ff0" strokeWidth="1" fontWeight="700" fontSize="19">
          <text transform="translate(750 132) rotate(3)" textLength="131" lengthAdjust="spacingAndGlyphs">Project Creators:</text>
          <text transform="translate(750 153) rotate(3)" textLength="168" lengthAdjust="spacingAndGlyphs">• Mary Joy D. Balajico</text>
          <text transform="translate(748 173) rotate(3)" textLength="170" lengthAdjust="spacingAndGlyphs">• Margie M. Mercader</text>
          <text transform="translate(746 193) rotate(3)" textLength="234" lengthAdjust="spacingAndGlyphs">• Rusel Christian T. Sabroseno</text>
        </g>
        <g strokeWidth="1.500" fontWeight="700" fontSize="27">
          <text transform="translate(411 1058) rotate(3)" textLength="178" lengthAdjust="spacingAndGlyphs" fill="#f00" stroke="#f00">Player 1 win's</text>
          <text transform="translate(407 1124) rotate(3)" textLength="178" lengthAdjust="spacingAndGlyphs" fill="#00f" stroke="#00f">Player 2 win's</text>
        </g>
      </g>
    </g>

    <g fontFamily="Liberation Sans" fontSize="15" fill="#4c545e" stroke="#fff" strokeWidth=".9">
      <text transform="translate(131 60) rotate(3)" textLength="56" lengthAdjust="spacingAndGlyphs">Legend:</text>
      <text transform="translate(174 99.500) rotate(3)" textLength="100" lengthAdjust="spacingAndGlyphs">X - for red Led</text>
      <text transform="translate(173 118) rotate(3)" textLength="108" lengthAdjust="spacingAndGlyphs">O - for blue Led</text>
      <text transform="translate(172 135.500) rotate(3)" textLength="101" lengthAdjust="spacingAndGlyphs">o - green color</text>
      <text transform="translate(127 152) rotate(3)" textLength="148" lengthAdjust="spacingAndGlyphs">designated for Switch</text>
    </g>

    <g strokeWidth="1">
      <path d="M52.500 374L49.500 420" stroke="#3e8e3e" strokeWidth="6" />
      <path d="M51.800 374L49 420" stroke="#7fd07f" strokeWidth="3" />
      <path d="M50 421.500L100 424.500" stroke="#8a3a3a" strokeWidth="6" />
      <path d="M50 421L99 423.500" stroke="#cf6a66" strokeWidth="3" />
      <circle cx="50" cy="421" r="3.500" fill="#2b4a72" stroke="none" />
      <path d="M50 360L55.500 366L61.500 360M55.500 366V372" stroke="#0ea50e" />
      <path d="M48 401.500H60L49 413.500H60" stroke="#0a5cf0" strokeWidth="1.300" />
      <path d="M95 410L107 422M107 410L95 422" stroke="#e02020" />
    </g>
  </Svg>
);

const ViewCube = () => (
  <Ico v="285 99 270 300">
    <circle cx="420.500" cy="248" r="107" stroke="#434b54" strokeWidth="27" />
    <path d="M371 181L473 186L469 291L364 285z" fill="#b9babb" stroke="#cccccb" strokeDasharray="20 4" />
    <path d="M388 200L454 203L451 268L385 264z" fill="#9fa5ae" stroke="none" />
    <g fontFamily="Liberation Sans" fontWeight="700" fontSize="42" fill="#bcbcbc" stroke="none" textAnchor="middle">
      <text x="425" y="152">N</text><text x="413" y="377">S</text><text x="308" y="256">W</text><text x="532" y="267">E</text>
      <text x="420" y="245" fontSize="29" textLength="43" lengthAdjust="spacingAndGlyphs" fill="#3c4653" transform="rotate(2 420 235)">TOP</text>
    </g>
  </Ico>
);

const NAVC = "#41474d";
const Navigation = () => (
  <NavBar>
    <Ico v="483 546 90 39"><circle cx="558" cy="558" r="12" fill="#45494c" stroke="none" /><S c="#777b7e" w={2.5} d="M553 553L563 563M563 553L553 563" /></Ico>
    <Ico v="483 585 90 129"><g stroke={NAVC} fill="#585f69"><path d="M528 602H559V633A31 31 0 1 1 528 602z" /><circle cx="528" cy="632" r="18" /><path d="M508 652L516 645M548 652L540 645" /></g><F c={NAVC} d="M521 690h18l-9 9z" /><S c="#6b7073" w={2} d="M488 712H568" /></Ico>
    <Ico v="483 714 90 87"><path d="M516 794L508 778L493 764Q494 757 503 761L511 766L502 739Q508 732 513 741L520 758V730Q527 724 531 731L533 756L540 733Q547 729 549 737L545 762L552 747Q560 744 559 753L549 782L543 794z" stroke={NAVC} fill="#585f69" /></Ico>
    <Ico v="483 801 90 114"><S c={NAVC} d="M494 812L538 856M538 812L494 856" /><F c={NAVC} d="M492 810h14l-14 14zM540 810v14l-14 -14zM492 858v-14l14 14z" /><circle cx="540" cy="854" r="14" fill="#666c73" stroke={NAVC} /><S c={NAVC} w={6} d="M550 865L562 877" /><F c={NAVC} d="M521 900h18l-9 9z" /></Ico>
    <Ico v="483 915 90 123"><g stroke={NAVC} fill="#5b6168"><ellipse cx="527" cy="965" rx="32" ry="11" fill="none" /><path d="M521 989V943H515L527 926L539 943H533V989z" /></g><F c={NAVC} d="M500 973l13 -9v20zM521 1014h18l-9 9z" /><S c="#6b7073" w={2} d="M488 1036H568" /></Ico>
    <Ico v="483 1038 90 102"><S c={NAVC} d="M494 1051.500h17v18h-17zM518 1051.500h17v18h-17zM542 1051.500h17v18h-17zM494 1078.500h48v39h-48z" /><F c={NAVC} d="M507 1086v24l22 -12z" /></Ico>
    <Ico v="483 1140 90 36"><circle cx="558" cy="1161" r="11" fill="#4a4f52" stroke={NAVC} /><S c="#777b7e" d="M552 1161H564" /></Ico>
  </NavBar>
);

const Canvas = () => (
  <Viewport>
    <Board />
    <Float $x={5} $y={4}><Txt w={130} $c="#e2e2e2">[−][Custom View][X-Ray]</Txt></Float>
    <Float $x={142} $y={1}>
      <CmdTools>
        <Ico v="426 9 48 78"><S dash="3 3" w={3} d="M439.500 19V70M445.500 19V70M451.500 19V70" /></Ico>
        <Ico v="474 9 126 78"><S w={5} d="M478 36L500 58M500 36L478 58" /><S w={7} d="M541 66L563 45" /><F d="M559 36Q562 26 574 28L568 37L573 43L582 36Q583 50 570 52L560 46z" /></Ico>
      </CmdTools>
      <CmdInput>
        <Row>
          <Ico v="600 9 111 75"><S c={BLUE} d="M634.500 42V51M630 46.500H639" /><F c="#666" d="M666 42h24l-12 11z" /></Ico>
          <CmdWord><Txt w={49} $bold $size={11.6} $c="#222">3DORBIT</Txt></CmdWord>
        </Row>
        <Ico v="120 9 39 75"><F c="#666" d="M127 50h22l-11 -9z" /></Ico>
      </CmdInput>
    </Float>
    <Float $x={206} $y={29}>
      <Hint><Txt w={532} $size={11.6}>3DORBIT Press ESC or ENTER to exit, or right-click to display shortcut-menu.</Txt></Hint>
    </Float>
    <Float $x={1060} $y={3}>
      <Ico v="390 15 180 66"><S c="#fff" w={7} d="M405 56H435" /><S c="#fff" w={5} d="M467 43H487V62H467zM473 36H494V56" /><S c="#fff" w={7} d="M528 37L549 59M549 37L528 59" /></Ico>
    </Float>
    <Float $x={1025} $y={31}><ViewCube /></Float>
    <Float $x={1046} $y={136}>
      <Wcs><Txt w={24} $size={12} $c="#474c58">WCS</Txt><Ico v="0 0 33 30"><S c="#dfe1ea" w={3} d="M5 9H28L16.500 20z" /></Ico></Wcs>
    </Float>
    <Float $x={1090} $y={179}><Navigation /></Float>
  </Viewport>
);

/* ---------- bottom strips ---------- */

const Strip = styled.div`
  height: 4px;
  flex: none;
  width: 1354px;
  margin-left: 3px;
  background: ${PANEL};
`;
const CommandLine = styled.div`
  display: flex;
  align-items: center;
  flex: none;
  width: 1350px;
  height: 24px;
  margin: 6px 0 0 5px;
  padding: 0 0 0 3px;
  background: ${PANEL};
`;
const Taskbar = styled.div`
  display: flex;
  flex: none;
  height: 45px;
  border-top: 1px solid #aebfc6;
  background: #cfe6ed;
  color: #1b1b1b;
`;
const SearchPill = styled.div`
  display: flex;
  align-items: center;
  gap: 10px;
  width: 219px;
  height: 31px;
  margin: 8px 3px 0 6px;
  padding-left: 11px;
  background: #f0f8fa;
  border: 1px solid #c2d4da;
  border-radius: 16px;
`;
const TwoLines = styled.div`
  display: flex;
  flex-direction: column;
  align-items: ${(p) => p.$align};
  width: ${(p) => p.$w}px;
  padding-top: 8px;
  line-height: 16px;
`;

const TaskApps = () => (
  <Row>
    <Ico v="0 63 132 132"><F c="#f3f3f3" d="M48 99h54v44h-54z" /><F c="#2b2b2b" d="M30 117h54v48h-54z" /><F c="#b4b4b4" d="M48 117h36v28h-36z" /></Ico>
    <Ico v="132 63 132 132"><circle cx="208" cy="110" r="13" fill="#7b83eb" stroke="none" /><circle cx="226" cy="111" r="9" fill="#5059c9" stroke="none" /><F c="#5059c9" d="M210 124h24v20q-6 18 -24 12z" /><F c="#7b83eb" d="M186 124h34v24q-6 20 -24 16q-10 -4 -10 -16z" /><F c="#f7f7fd" d="M162 111h42v42h-42z" /><text x="172" y="144" fontSize="34" fontWeight="700" fill="#4b53bc" stroke="none">T</text></Ico>
    <Ico v="264 63 132 132"><F c="#e0a010" d="M294 100h26l8 8v10h-34z" /><F c="#fbcb4d" d="M294 112l30 0l6 -6h36v57h-72z" /><F c="#1479cc" d="M308 163v-14q0 -6 6 -6h32q6 0 6 6v14z" /></Ico>
    <Ico v="396 63 132 132"><circle cx="462" cy="131" r="30" fill="#1e1f20" stroke="#aaa" /><circle cx="462" cy="131" r="20" stroke="#666" strokeWidth="2" strokeDasharray="30 12" /><S c="#d0d0d0" w={4} d="M462 131Q450 124 455 108M462 131Q474 124 484 136M462 131Q462 146 446 148" /></Ico>
    <Ico v="528 63 132 132">
      <circle cx="594" cy="132" r="36" fill="#1568b8" stroke="none" /><path d="M558 126A36 36 0 0 1 630 128Q630 146 608 146Q600 142 606 134Q608 118 590 114Q568 112 558 126z" fill="#37b9c9" stroke="none" /><path d="M600 97A36 36 0 0 1 630 130Q628 146 610 146Q602 142 607 134Q612 112 590 104z" fill="#5fd87c" stroke="none" />
      <path d="M586 124Q580 152 606 158Q622 158 626 148Q606 154 598 142Q592 132 600 124z" fill="#cfe6ed" stroke="none" /><rect x="585" y="180" width="18" height="9" rx="4" fill="#7c8489" stroke="none" />
    </Ico>
    <Ico v="660 63 132 132"><F c="#d63022" d="M690 96h72v72h-72z" /><F c="#951a10" d="M690 159h72v9h-72z" /><S c="#fff" w={6} d="M737 110Q724 104 723 116V140M713 124H735" /><circle cx="723" cy="146" r="5" stroke="#fff" /></Ico>
    <Ico v="792 63 132 132"><rect x="830" y="102" width="56" height="58" rx="10" fill="#fbfbfb" stroke="none" /><F c="#33201d" d="M842 154Q836 108 858 107Q882 108 876 154z" /><ellipse cx="859" cy="132" rx="11" ry="14" fill="#f1c9b9" stroke="none" /><F c="#33201d" d="M847 128Q848 114 862 113Q870 118 870 126Q860 118 847 128z" /><F c="#9db4d8" d="M848 153q11 -10 22 0v5h-22z" /><S c="#5b2a2a" w={2.5} d="M852 131h4M862 131h4M856 140h6" /></Ico>
    <Ico v="924 63 132 132">
      <defs><linearGradient id="msg" x1="0" y1="1" x2="1" y2="0"><stop offset="0" stopColor="#0a7cff" /><stop offset=".5" stopColor="#a033ff" /><stop offset="1" stopColor="#ff5c87" /></linearGradient></defs>
      <path d="M990 96A36 34 0 1 1 978 163L966 168V156A36 34 0 0 1 990 96z" fill="url(#msg)" stroke="none" /><S c="#fff" w={7} d="M972 139L984 127L994 134L1008 122" />
    </Ico>
    <Ico v="1056 63 132 132">
      <rect x="1065" y="75" width="114" height="114" rx="9" fill="#e6f1f5" stroke="#d8e5ea" /><F c="#b50d3e" d="M1140 96L1154 102V166L1140 168z" /><F c="#e51050" d="M1089 98Q1089 96 1092 96H1146V150H1089z" /><F c="#7d0b2f" d="M1095 147H1154V168H1095z" />
      <text x="1112" y="135" fontSize="37" fontWeight="700" fill="#fff" stroke="none">A</text><text x="1110" y="163" fontSize="15" fontWeight="700" fill="#fff" stroke="none" textLength="29">CAD</text>
      <rect x="1098" y="180" width="48" height="9" rx="4" fill="#1f7d8c" stroke="none" />
    </Ico>
    <Ico v="1188 63 132 132"><rect x="1194" y="72" width="120" height="120" rx="9" fill="#fce4e6" stroke="none" /><F c="#fff" d="M1218 96h72v72h-72z" /><F c="#000" d="M1229 150Q1226 140 1234 134L1259 115H1280V131H1262L1240 148Q1235 151 1229 150z" /><F c="#000" d="M1250 145L1262 136H1280V151H1270V143L1258 149z" /><rect x="1245" y="180" width="18" height="9" rx="4" fill="#c42b1c" stroke="none" /></Ico>
  </Row>
);

const Tray = () => (
  <Row $align="flex-start">
    <Ico v="-45 63 270 132"><S c="#1b1b1b" w={4} d="M162 139L176 125L190 139" /></Ico>
    <Ico v="225 63 96 132"><path d="M262 148A13 13 0 0 1 259 123Q264 112 276 115Q286 117 288 127A11 11 0 0 1 288 148z" fill="#a9b0b3" stroke="#1b1b1b" strokeWidth="4" /><S c="#cfe6ed" w={4} d="M255 118L291 152" /><S c="#1b1b1b" w={4} d="M252 116L294 151" /></Ico>
    <Ico v="321 63 96 132"><rect x="347" y="117" width="44" height="30" rx="4" stroke="#1b1b1b" /><S c="#1b1b1b" w={4} dash="4 4" d="M354 125H386M354 132H386" /><S c="#1b1b1b" w={3} d="M357 140H380" /></Ico>
    <Ico v="417 63 96 132"><rect x="443" y="116" width="42" height="33" rx="6" stroke="#1b1b1b" /><S c="#1b1b1b" d="M443 135H485M464 135V149" /></Ico>
    <TwoLines $w={44} $align="center"><Txt w={23}>ENG</Txt><Txt w={15}>US</Txt></TwoLines>
    <Ico v="645 63 84 132"><g stroke="#9fb4bb"><path d="M670 126Q692 106 715 126M677 134Q692 120 708 134" /></g><path d="M684 141Q692 134 701 141" stroke="#5f6f75" /><circle cx="692" cy="144" r="4.500" fill="#222" stroke="none" /></Ico>
    <Ico v="729 63 72 132"><S c="#1b1b1b" d="M743 126H750L760 117V147L750 138H743z" /><S c="#1b1b1b" d="M766 124Q771 132 766 139M773 120Q780 132 773 144M780 116Q790 132 780 149" /></Ico>
    <Ico v="801 63 75 132"><rect x="816" y="118" width="38" height="27" rx="5" stroke="#1b1b1b" strokeWidth="4" /><F c="#1b1b1b" d="M820 122h20v19h-20zM856 126h5v11h-5z" /><F c="#1b1b1b" s="#cfe6ed" d="M820 107L811 124H818L815 137L829 119H821L826 107z" /></Ico>
    <TwoLines $w={81} $align="flex-end"><Txt w={43}>1:08 pm</Txt><Txt w={69}>31 May 2024</Txt></TwoLines>
    <Ico v="1119 63 96 132"><F c="#1b4a5a" d="M1148 144V128Q1149 111 1164 111Q1179 111 1180 128V144L1184 150H1144zM1157 152h14q-7 8 -14 0z" /></Ico>
    <Ico v="1215 63 150 132">
      <defs><linearGradient id="cop" x1="0" y1="0" x2="0" y2="1"><stop offset="0" stopColor="#2076e8" /><stop offset=".5" stopColor="#35c08c" /><stop offset="1" stopColor="#ffcf20" /></linearGradient></defs>
      <path d="M1258 101H1280Q1290 102 1293 118H1280Q1270 120 1266 134L1260 152H1246Q1238 150 1240 138L1248 112Q1252 102 1258 101z" fill="url(#cop)" stroke="none" />
      <path d="M1288 118H1300Q1308 120 1307 130L1300 150H1268Q1276 150 1279 140L1283 124Q1284 118 1288 118z" fill="#d65fd0" stroke="none" /><rect x="1254" y="147" width="54" height="21" rx="5" fill="#ffc400" stroke="none" />
      <text x="1262" y="164" fontSize="19" fontWeight="700" fill="#111" stroke="none" textLength="38" lengthAdjust="spacingAndGlyphs">PRE</text>
    </Ico>
  </Row>
);

const tabs = [["Home", 33], ["Insert", 29], ["Annotate", 49], ["Parametric", 57], ["View", 25], ["Manage", 43], ["Output", 38], ["Add-ins", 42], ["Collaborate", 61], ["Express Tools", 69], ["Featured Apps", 76]];

export default function App() {
  return (
    <Desktop>
      <Global />
      <Window>
        <TitleStrip />
        <Tabs>
          {tabs.map(([t, w], i) => <Tab key={t} $on={i === 0}><Txt w={w}>{t}</Txt></Tab>)}
          <Ico v="918 96 111 60"><F c="#f4f4f4" d="M951 117h45v24h-45z" /><F c="#555" d="M965 133h17l-8.500 -8z" /><Down x={1015} y={130} /></Ico>
        </Tabs>
        <RibbonBar />
        <FileTabs $pl={12} $pt={3}>
          <Row $w={16}><Slash /></Row>
          <Row $w={32} $pb={1}><Txt w={24}>Start</Txt></Row>
          <Slanted $w={174} $h={24} $pl={16}>
            <Txt w={129} $bold>RMJ's XO Game (Sir VJ)</Txt>
            <Ico v="0 0 27 27"><S c="#a5aab2" w={5} d="M4 3L23 22M23 3L4 22" /></Ico>
          </Slanted>
          <Row $w={23} $pl={8}><Plus /></Row>
          <Row $pl={9}><Slash /></Row>
        </FileTabs>
        <Main>
          <CalcPalette />
          <Canvas />
        </Main>
        <Strip />
        <FileTabs $pl={11} $h={24}>
          <Slanted $w={69} $h={24} $pl={17}><Txt w={35} $bold>Model</Txt></Slanted>
          <Row $pl={7} $w={57}><Txt w={41}>Layout1</Txt></Row>
          <Row $w={16}><Slash /></Row>
          <Row $w={50}><Txt w={42}>Layout2</Txt></Row>
          <Row $w={17}><Slash /></Row>
          <Row $w={23}><Plus /></Row>
          <Slash />
        </FileTabs>
        <CommandLine><Txt w={352}>Press ESC or ENTER to exit, or right-click to display shortcut-menu.</Txt></CommandLine>
      </Window>
      <Taskbar>
        <Ico v="0 63 567 132">
          <F c="#fa7a3c" d="M66 130Q66 120 77 112Q78 120 84 121Q88 126 86 132Q84 140 76 140Q67 139 66 130z" /><F c="#ffc04a" d="M72 134Q74 128 77 126Q82 130 80 136Q76 140 72 134z" />
          <path d="M96 118h14v30a13 13 0 1 1 -14 0z" fill="#d5d3f5" stroke="none" /><path d="M104 118V152" stroke="#d8264c" strokeWidth="6" /><circle cx="104" cy="156" r="8" fill="#e02850" stroke="none" />
          <circle cx="117" cy="105" r="24" fill="#c42b1c" stroke="none" /><text x="110" y="115" fontSize="28" fill="#fff" stroke="none">1</text>
        </Ico>
        <Ico v="567 63 114 132">
          <defs><linearGradient id="win" gradientUnits="userSpaceOnUse" x1="591" y1="100" x2="660" y2="170"><stop offset="0" stopColor="#4cc9fb" /><stop offset="1" stopColor="#0066cc" /></linearGradient></defs>
          <path d="M591 99h33v33h-33zM627 99h33v33h-33zM591 135h33v33h-33zM627 135h33v33h-33z" fill="url(#win)" stroke="none" />
        </Ico>
        <SearchPill>
          <Ico v="735 111 45 51"><circle cx="754" cy="134" r="16" stroke="#222" strokeWidth="5" /><S c="#222" w={5} d="M765 146L777 158" /></Ico>
          <Txt w={41} $c="#5d6467">Search</Txt>
        </SearchPill>
        <TaskApps />
        <Tray />
      </Taskbar>
    </Desktop>
  );
}
